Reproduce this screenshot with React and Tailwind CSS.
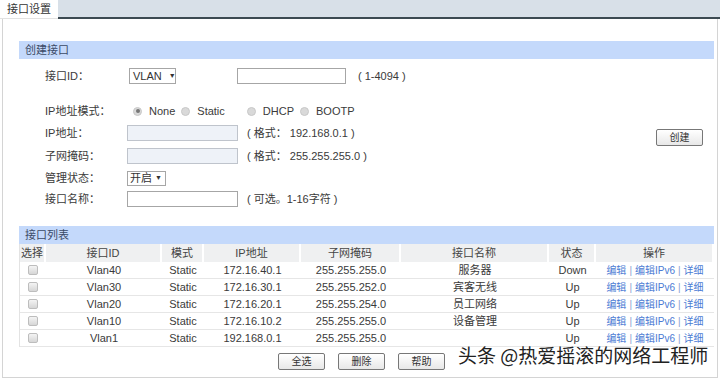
import React from 'react';

// 接口设置页面 — 创建接口 + 接口列表
const FONT = { fontFamily: '"Liberation Sans", Arial, "Noto Sans CJK SC", sans-serif' };

const ROWS = [
    { id: 'Vlan40', mode: 'Static', ip: '172.16.40.1', mask: '255.255.255.0', name: '服务器', state: 'Down' },
    { id: 'Vlan30', mode: 'Static', ip: '172.16.30.1', mask: '255.255.252.0', name: '宾客无线', state: 'Up' },
    { id: 'Vlan20', mode: 'Static', ip: '172.16.20.1', mask: '255.255.254.0', name: '员工网络', state: 'Up' },
    { id: 'Vlan10', mode: 'Static', ip: '172.16.10.2', mask: '255.255.255.0', name: '设备管理', state: 'Up' },
    { id: 'Vlan1', mode: 'Static', ip: '192.168.0.1', mask: '255.255.255.0', name: '', state: 'Up' },
];

const COLS = [
    { label: '选择', w: 'w-[26px]' },
    { label: '接口ID', w: 'w-[116px]' },
    { label: '模式', w: 'w-[42px]' },
    { label: 'IP地址', w: 'w-[97px]' },
    { label: '子网掩码', w: 'w-[100px]' },
    { label: '接口名称', w: 'w-[148px]' },
    { label: '状态', w: 'w-[47px]' },
    { label: '操作', w: 'w-[118px]' },
];

function SectionBar({ title }) {
    return (
        <div className="h-[18px] bg-[#c4d9fb] flex items-center pl-[6px] text-[11px] text-[#3b4a66]">
            {title}
        </div>
    );
}

function Label({ children }) {
    return <div className="w-[82px] shrink-0 text-[11px] text-[#3a3a3a]">{children}</div>;
}

function Radio({ checked, label, className = '' }) {
    return (
        <div className={`flex items-center ${className}`}>
            <span className="w-[9px] h-[9px] rounded-full bg-[#d9d9d9] border border-[#c8c8c8] flex items-center justify-center">
                {checked && <span className="w-[4px] h-[4px] rounded-full bg-[#777]" />}
            </span>
            <span className="ml-[7px] text-[11px] text-[#3a3a3a]">{label}</span>
        </div>
    );
}

function Btn({ children }) {
    return (
        <button className="w-[47px] h-[17px] border border-[#777] rounded-[2px] bg-gradient-to-b from-white to-[#e8e8e8] text-[10px] text-[#333] flex items-center justify-center">
            {children}
        </button>
    );
}

function Check() {
    return <span className="inline-block w-[10px] h-[10px] rounded-[2px] border border-[#bdbdbd] bg-gradient-to-b from-[#f4f4f4] to-[#d6d6d6]" />;
}

export default function App() {
    return (
        <div className="w-[720px] h-[379px] bg-white relative overflow-hidden" style={FONT}>
            {/* 顶部标签栏 */}
            <div className="h-[19px] bg-[#d8e0e8] flex">
                <div className="w-[58px] bg-white flex items-center pl-[7px] text-[11px] text-[#333] border-b border-[#e2e2e2]">
                    接口设置
                </div>
                <div className="flex-1 border-b-2 border-[#3c4a52]" />
            </div>

            {/* 主框 */}
            <div className="ml-[2px] mr-[2px] h-[359px] border-l border-r border-b border-[#d4d4d4] pl-[16px] pr-[3px] pt-[22px]">
                <SectionBar title="创建接口" />

                <div className="flex">
                    <div className="flex-1 pl-[26px]">
                        <div className="flex items-center h-[16px] mt-[9px]">
                            <Label>接口ID：</Label>
                            <div className="ml-[2px] w-[47px] h-[16px] border border-[#a6a6a6] flex items-center pl-[3px] text-[11px] text-[#333]">
                                VLAN <span className="ml-[7px] text-[7px]">▼</span>
                            </div>
                            <div className="ml-[61px] w-[109px] h-[16px] border border-[#a6a6a6] bg-white" />
                            <span className="ml-[12px] text-[11px] text-[#3a3a3a]">( 1-4094 )</span>
                        </div>

                        <div className="flex items-center h-[16px] mt-[19px]">
                            <Label>IP地址模式：</Label>
                            <Radio checked label="None" className="ml-[6px]" />
                            <Radio label="Static" className="ml-[6px]" />
                            <Radio label="DHCP" className="ml-[22px]" />
                            <Radio label="BOOTP" className="ml-[6px]" />
                        </div>

                        <div className="flex items-center h-[16px] mt-[6px]">
                            <Label>IP地址：</Label>
                            <div className="w-[111px] h-[16px] border border-[#bfc4cc] bg-[#eef2f8]" />
                            <span className="ml-[9px] text-[11px] text-[#3a3a3a]">( 格式： 192.168.0.1 )</span>
                        </div>

                        <div className="flex items-center h-[16px] mt-[7px]">
                            <Label>子网掩码：</Label>
                            <div className="w-[111px] h-[16px] border border-[#bfc4cc] bg-[#eef2f8]" />
                            <span className="ml-[9px] text-[11px] text-[#3a3a3a]">( 格式： 255.255.255.0 )</span>
                        </div>

                        <div className="flex items-center h-[16px] mt-[6px]">
                            <Label>管理状态：</Label>
                            <div className="w-[39px] h-[15px] border border-[#a6a6a6] flex items-center pl-[2px] text-[11px] text-[#333]">
                                开启<span className="ml-[3px] text-[7px]">▼</span>
                            </div>
                        </div>

                        <div className="flex items-center h-[16px] mt-[5px]">
                            <Label>接口名称：</Label>
                            <div className="w-[111px] h-[16px] border border-[#a6a6a6] bg-white" />
                            <span className="ml-[9px] text-[11px] text-[#3a3a3a]">( 可选。1-16字符 )</span>
                        </div>
                    </div>
                    <div className="pt-[70px] pr-[11px]">
                        <Btn>创建</Btn>
                    </div>
                </div>

                <div className="mt-[19px]">
                    <SectionBar title="接口列表" />
                </div>

                <div className="border-l border-[#e3e3e3]">
                    <div className="flex h-[18px] bg-white">
                        {COLS.map((c) => (
                            <div key={c.label} className={`${c.w} h-full bg-[#eff0f1] border-r-2 border-white flex items-center justify-center text-[11px] text-[#444]`}>
                                {c.label}
                            </div>
                        ))}
                    </div>
                    {ROWS.map((r) => (
                        <div key={r.id} className="flex h-[17px] border-b border-[#e6e6e6] text-[11px] text-[#3a3a3a]">
                            <div className="w-[26px] flex items-center justify-center"><Check /></div>
                            <div className="w-[116px] flex items-center justify-center">{r.id}</div>
                            <div className="w-[42px] flex items-center justify-center">{r.mode}</div>
                            <div className="w-[97px] flex items-center justify-center">{r.ip}</div>
                            <div className="w-[100px] flex items-center justify-center">{r.mask}</div>
                            <div className="w-[148px] flex items-center justify-center">{r.name}</div>
                            <div className="w-[47px] flex items-center justify-center">{r.state}</div>
                            <div className="w-[118px] flex items-center justify-center text-[10px] text-[#4b7bd4]">
                                编辑<span className="mx-[3px] text-[#8aa3d0]">|</span>编辑IPv6<span className="mx-[3px] text-[#8aa3d0]">|</span>详细
                            </div>
                        </div>
                    ))}
                </div>

                <div className="flex justify-start gap-[13px] mt-[6px] pl-[259px]">
                    <Btn>全选</Btn>
                    <Btn>删除</Btn>
                    <Btn>帮助</Btn>
                </div>
            </div>

            {/* 水印 */}
            <div className="absolute left-[458px] top-[344px] text-[19px] leading-[22px] text-[#222]" style={{ fontFamily: '"Noto Sans CJK SC", sans-serif', textShadow: '0 0 2px #fff' }}>
                头条 @热爱摇滚的网络工程师
            </div>
        </div>
    );
}
